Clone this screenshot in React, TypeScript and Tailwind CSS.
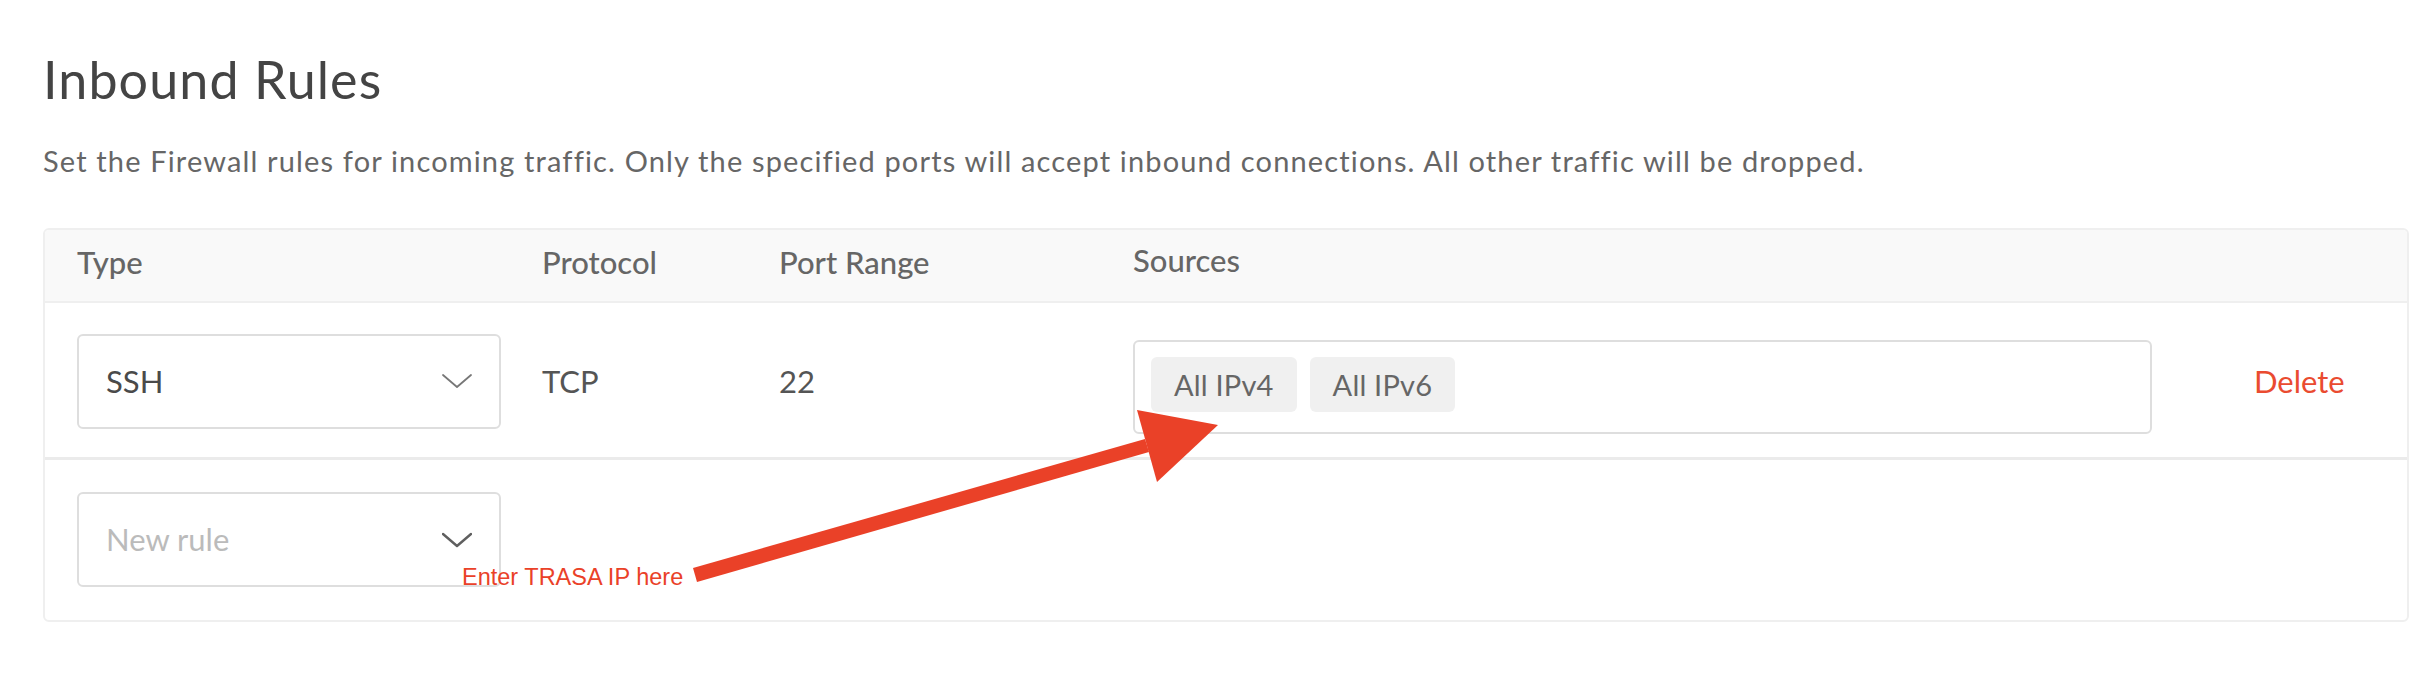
const font = "font-['Lato','Liberation_Sans',sans-serif]"

function Chevron({ dark }: { dark?: boolean }) {
  return (
    <svg width="30" height="16" viewBox="0 0 30 16" fill="none" className={dark ? 'text-[#5f5f5f]' : 'text-[#777]'}>
      <polyline points="1,2 15,14 29,2" stroke="currentColor" strokeWidth={dark ? 2.4 : 1.8} strokeLinecap="round" strokeLinejoin="round" />
    </svg>
  )
}

function Select({ value, placeholder }: { value?: string; placeholder?: string }) {
  return (
    <div className="w-[424px] h-[95px] border-2 border-[#dedede] rounded-[6px] bg-white flex items-center justify-between pl-[27px] pr-[27px]">
      {value ? (
        <span className="text-[31px] leading-none text-[#4a4a4a]">{value}</span>
      ) : (
        <span className="text-[31px] leading-none text-[#bbbbbb]">{placeholder}</span>
      )}
      <Chevron dark={!value} />
    </div>
  )
}

function Tag({ label }: { label: string }) {
  return (
    <span className="h-[55px] px-[23px] rounded-[6px] bg-[#f0f0f0] flex items-center text-[29px] leading-none text-[#666] tracking-[0.2px]">
      {label}
    </span>
  )
}

export default function App() {
  return (
    <div className={`relative w-[2424px] h-[680px] bg-white overflow-hidden pl-[43px] pr-[15px] pt-[53px] ${font}`}>
      <h1 className="text-[52px] leading-none text-[#444] tracking-[1.1px]">Inbound Rules</h1>
      <p className="mt-[41px] text-[29px] leading-none text-[#666] tracking-[1.15px]">
        Set the Firewall rules for incoming traffic. Only the specified ports will accept inbound connections. All other traffic will be dropped.
      </p>

      {/* rules table */}
      <div className="mt-[53px] border-2 border-[#efefef] rounded-[6px] overflow-hidden">
        <div className="h-[73px] bg-[#f9f9f9] border-b-2 border-[#efefef] pl-[32px] pb-[6px] grid grid-cols-[465px_237px_354px_1fr] items-center text-[31px] leading-none font-medium text-[#666]">
          <span>Type</span>
          <span>Protocol</span>
          <span>Port Range</span>
          <span className="-mt-[5px]">Sources</span>
        </div>

        <div className="h-[157px] border-b-[3px] border-[#ebebeb] pl-[32px] pt-[2px] grid grid-cols-[465px_237px_354px_1019px_1fr] items-center text-[31px] leading-none text-[#555]">
          <Select value="SSH" />
          <span>TCP</span>
          <span>22</span>
          <div className="mt-[12px] h-[94px] border-2 border-[#dedede] rounded-[6px] pl-[16px] pt-[15px] flex items-start gap-[13px]">
            <Tag label="All IPv4" />
            <Tag label="All IPv6" />
          </div>
          <span className="pl-[102px] text-[#ea4b30]">Delete</span>
        </div>

        <div className="h-[160px] pl-[32px] pt-[32px]">
          <Select placeholder="New rule" />
        </div>
      </div>

      {/* annotation */}
      <span className="absolute left-[462px] top-[566px] font-['Liberation_Sans',Arial,sans-serif] text-[23.5px] leading-none text-[#ea4128]">
        Enter TRASA IP here
      </span>
      <svg className="absolute left-0 top-0 pointer-events-none" width="2424" height="680" viewBox="0 0 2424 680">
        <polygon points="693,568 697,582 1149,452 1145,439" fill="#ea4128" />
        <polygon points="1137,410 1218,425 1157,482" fill="#ea4128" />
      </svg>
    </div>
  )
}
